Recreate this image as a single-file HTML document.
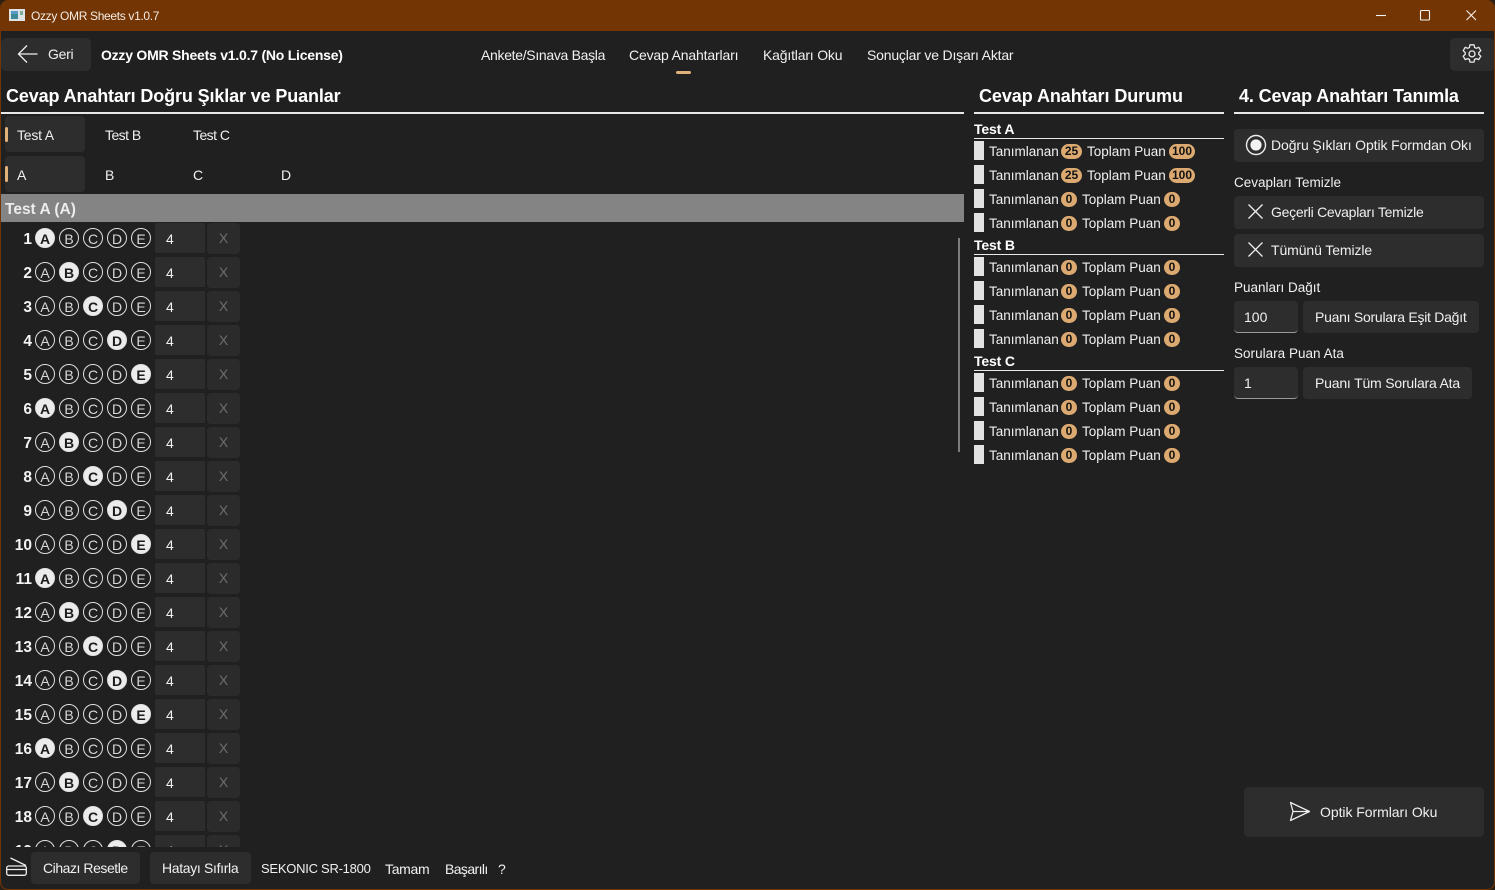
<!DOCTYPE html>
<html><head><meta charset="utf-8"><title>Ozzy OMR Sheets</title>
<style>
*{box-sizing:border-box}
html,body{margin:0;padding:0;width:1495px;height:890px;overflow:hidden;background:#2a2015}
body{font-family:"Liberation Sans",sans-serif;color:#f0f0f0;font-size:13px}
#w{position:absolute;left:0;top:0;width:1495px;height:890px;background:#202020;border:1px solid #733504;border-top:0;border-radius:8px;overflow:hidden}
#w>*{position:absolute}
.a{position:absolute}
.t{position:absolute;white-space:nowrap;line-height:20px;height:20px}
.st{position:absolute;white-space:nowrap;line-height:20px;height:20px;font-size:13.5px}
.b{position:absolute;background:#2d2d2d;border-radius:4px}
.h{position:absolute;white-space:nowrap;font-weight:bold;font-size:18px;line-height:24px;color:#fff}
.l{position:absolute;height:2px;background:#e8e8e8}
.l1{position:absolute;height:1px;background:#e8e8e8}
.s{position:absolute;left:973px;width:10px;height:19px;background:#e2e2e2}
.g{position:absolute;height:15px;line-height:15px;border-radius:8px;background:#dcaa70;color:#111;text-align:center;font-size:12px;font-weight:bold}
.tb{position:absolute;font-weight:bold;font-size:14px;line-height:18px;color:#fff;left:973px;letter-spacing:-.15px}
.r{position:absolute;left:0;width:958px;height:34px}
.n{position:absolute;right:927px;top:7px;font-weight:bold;font-size:15.5px;line-height:20px;color:#f4f4f4}
.c{position:absolute;top:5px;width:20px;height:20px;border:1px solid #e0e0e0;border-radius:50%;text-align:center;font-style:normal;font-size:14px;line-height:20px;color:#d8d8d8}
.c.on{background:#ececec;color:#1c1c1c;font-weight:bold}
.c1{left:34px}.c2{left:58px}.c3{left:82px}.c4{left:106px}.c5{left:130px}
.i{position:absolute;left:154px;top:0;width:50px;height:30px;background:#2d2d2d;border-radius:2px 0 0 2px;font-size:14px;line-height:32px;padding-left:11px;color:#f0f0f0}
.x{position:absolute;left:206px;top:0;width:33px;height:31px;background:#2b2b2b;border-radius:4px;text-align:center;font-size:14px;line-height:31px;color:#6e6e6e}
.u{border-bottom:1px solid #9a9a9a}
</style></head><body>
<div id="w">
<div class="a" style="left:-1px;top:0;width:1495px;height:31px;background:#733504"></div>
<svg class="a" style="left:8px;top:9px" width="16" height="12" viewBox="0 0 16 12"><rect width="16" height="12" fill="#dfe3e6"/><rect x="2" y="2" width="7" height="8" fill="#3d8a96"/><rect x="2" y="2" width="7" height="3" fill="#5a9ac8"/><rect x="11" y="2" width="3" height="4" fill="#7fae9a"/></svg>
<div class="t" style="left:30px;top:6px;font-size:12px;letter-spacing:-.33px;color:#f2ece6">Ozzy OMR Sheets v1.0.7</div>
<svg class="a" style="left:1370px;top:8px" width="115" height="16" viewBox="0 0 115 16" fill="none" stroke="#f2f2f2" stroke-width="1.1"><path d="M5 7.5h10"/><rect x="49.5" y="2.5" width="9" height="9.5" rx="1"/><path d="M95.5 2.5l9.5 9.5M105 2.5l-9.5 9.5"/></svg>

<div class="b" style="left:0;top:38px;width:90px;height:33px;border-radius:5px"></div>
<svg class="a" style="left:16px;top:44px" width="22" height="20" viewBox="0 0 22 20" fill="none" stroke="#eee" stroke-width="1.3"><path d="M20.5 10H1.5M10 1.5L1.5 10l8.5 8.5"/></svg>
<div class="t" style="left:47px;top:44px;font-size:14px;letter-spacing:-.3px">Geri</div>
<div class="t" style="left:100px;top:45px;font-size:14px;font-weight:bold;color:#fff;letter-spacing:-.23px">Ozzy OMR Sheets v1.0.7 (No License)</div>
<div class="t" style="left:480px;top:45px;font-size:14px;letter-spacing:-.31px">Ankete/Sınava Başla</div>
<div class="t" style="left:628px;top:45px;font-size:14px;letter-spacing:-.16px">Cevap Anahtarları</div>
<div class="a" style="left:675px;top:71px;width:15px;height:3px;border-radius:2px;background:#e2b07a"></div>
<div class="t" style="left:762px;top:45px;font-size:14px;letter-spacing:-.18px">Kağıtları Oku</div>
<div class="t" style="left:866px;top:45px;font-size:14px;letter-spacing:-.19px">Sonuçlar ve Dışarı Aktar</div>
<div class="b" style="left:1449px;top:38px;width:45px;height:33px;border-radius:5px"></div>
<svg class="a" style="left:1460px;top:43px" width="22" height="22" viewBox="0 0 22 22" fill="none" stroke="#eaeaea" stroke-width="1.3" stroke-linejoin="round"><path d="M9 1.8h4l.6 2.7 1.7.8 2.5-1 2 3.4-2 1.8v1.9l2 1.8-2 3.4-2.5-1-1.7.8-.6 2.7H9l-.6-2.7-1.7-.8-2.5 1-2-3.4 2-1.8v-1.9l-2-1.8 2-3.4 2.5 1 1.7-.8z"/><circle cx="11" cy="10.9" r="3"/></svg>

<div class="h" style="left:5px;top:84px;letter-spacing:-.13px">Cevap Anahtarı Doğru Şıklar ve Puanlar</div>
<div class="l" style="left:0;top:112px;width:963px"></div>
<div class="b" style="left:4px;top:116px;width:80px;height:36px"></div>
<div class="a" style="left:4px;top:127px;width:3px;height:15px;border-radius:2px;background:#e2b07a"></div>
<div class="t" style="left:16px;top:125px;font-size:14px;letter-spacing:-.2px">Test A</div>
<div class="t" style="left:104px;top:125px;font-size:14px;letter-spacing:-.55px">Test B</div>
<div class="t" style="left:192px;top:125px;font-size:14px;letter-spacing:-.55px">Test C</div>
<div class="b" style="left:4px;top:156px;width:80px;height:36px"></div>
<div class="a" style="left:4px;top:166px;width:3px;height:16px;border-radius:2px;background:#e2b07a"></div>
<div class="t" style="left:16px;top:165px;font-size:14px">A</div>
<div class="t" style="left:104px;top:165px;font-size:14px">B</div>
<div class="t" style="left:192px;top:165px;font-size:14px">C</div>
<div class="t" style="left:280px;top:165px;font-size:14px">D</div>
<div class="a" style="left:0;top:194px;width:963px;height:28px;background:#848484"></div>
<div class="t" style="left:4px;top:198.500px;font-size:15.5px;font-weight:bold;color:#ececec;margin-top:1px">Test A (A)</div>

<div class="a" style="left:0;top:222px;width:958px;height:625px;overflow:hidden">
<div class="r" style="top:1px"><span class="n">1</span><i class="c c1 on">A</i><i class="c c2">B</i><i class="c c3">C</i><i class="c c4">D</i><i class="c c5">E</i><div class="i">4</div><div class="x">X</div></div>
<div class="r" style="top:35px"><span class="n">2</span><i class="c c1">A</i><i class="c c2 on">B</i><i class="c c3">C</i><i class="c c4">D</i><i class="c c5">E</i><div class="i">4</div><div class="x">X</div></div>
<div class="r" style="top:69px"><span class="n">3</span><i class="c c1">A</i><i class="c c2">B</i><i class="c c3 on">C</i><i class="c c4">D</i><i class="c c5">E</i><div class="i">4</div><div class="x">X</div></div>
<div class="r" style="top:103px"><span class="n">4</span><i class="c c1">A</i><i class="c c2">B</i><i class="c c3">C</i><i class="c c4 on">D</i><i class="c c5">E</i><div class="i">4</div><div class="x">X</div></div>
<div class="r" style="top:137px"><span class="n">5</span><i class="c c1">A</i><i class="c c2">B</i><i class="c c3">C</i><i class="c c4">D</i><i class="c c5 on">E</i><div class="i">4</div><div class="x">X</div></div>
<div class="r" style="top:171px"><span class="n">6</span><i class="c c1 on">A</i><i class="c c2">B</i><i class="c c3">C</i><i class="c c4">D</i><i class="c c5">E</i><div class="i">4</div><div class="x">X</div></div>
<div class="r" style="top:205px"><span class="n">7</span><i class="c c1">A</i><i class="c c2 on">B</i><i class="c c3">C</i><i class="c c4">D</i><i class="c c5">E</i><div class="i">4</div><div class="x">X</div></div>
<div class="r" style="top:239px"><span class="n">8</span><i class="c c1">A</i><i class="c c2">B</i><i class="c c3 on">C</i><i class="c c4">D</i><i class="c c5">E</i><div class="i">4</div><div class="x">X</div></div>
<div class="r" style="top:273px"><span class="n">9</span><i class="c c1">A</i><i class="c c2">B</i><i class="c c3">C</i><i class="c c4 on">D</i><i class="c c5">E</i><div class="i">4</div><div class="x">X</div></div>
<div class="r" style="top:307px"><span class="n">10</span><i class="c c1">A</i><i class="c c2">B</i><i class="c c3">C</i><i class="c c4">D</i><i class="c c5 on">E</i><div class="i">4</div><div class="x">X</div></div>
<div class="r" style="top:341px"><span class="n">11</span><i class="c c1 on">A</i><i class="c c2">B</i><i class="c c3">C</i><i class="c c4">D</i><i class="c c5">E</i><div class="i">4</div><div class="x">X</div></div>
<div class="r" style="top:375px"><span class="n">12</span><i class="c c1">A</i><i class="c c2 on">B</i><i class="c c3">C</i><i class="c c4">D</i><i class="c c5">E</i><div class="i">4</div><div class="x">X</div></div>
<div class="r" style="top:409px"><span class="n">13</span><i class="c c1">A</i><i class="c c2">B</i><i class="c c3 on">C</i><i class="c c4">D</i><i class="c c5">E</i><div class="i">4</div><div class="x">X</div></div>
<div class="r" style="top:443px"><span class="n">14</span><i class="c c1">A</i><i class="c c2">B</i><i class="c c3">C</i><i class="c c4 on">D</i><i class="c c5">E</i><div class="i">4</div><div class="x">X</div></div>
<div class="r" style="top:477px"><span class="n">15</span><i class="c c1">A</i><i class="c c2">B</i><i class="c c3">C</i><i class="c c4">D</i><i class="c c5 on">E</i><div class="i">4</div><div class="x">X</div></div>
<div class="r" style="top:511px"><span class="n">16</span><i class="c c1 on">A</i><i class="c c2">B</i><i class="c c3">C</i><i class="c c4">D</i><i class="c c5">E</i><div class="i">4</div><div class="x">X</div></div>
<div class="r" style="top:545px"><span class="n">17</span><i class="c c1">A</i><i class="c c2 on">B</i><i class="c c3">C</i><i class="c c4">D</i><i class="c c5">E</i><div class="i">4</div><div class="x">X</div></div>
<div class="r" style="top:579px"><span class="n">18</span><i class="c c1">A</i><i class="c c2">B</i><i class="c c3 on">C</i><i class="c c4">D</i><i class="c c5">E</i><div class="i">4</div><div class="x">X</div></div>
<div class="r" style="top:613px"><span class="n">19</span><i class="c c1">A</i><i class="c c2">B</i><i class="c c3">C</i><i class="c c4 on">D</i><i class="c c5">E</i><div class="i">4</div><div class="x">X</div></div>
</div>
<div class="a" style="left:957px;top:238px;width:2px;height:214px;background:#7c7c7c"></div>

<div class="h" style="left:978px;top:84px;letter-spacing:-.07px">Cevap Anahtarı Durumu</div>
<div class="l" style="left:973px;top:112px;width:250px"></div>

<div class="tb" style="top:120px">Test A</div><div class="l1" style="left:973px;top:138px;width:250px"></div>
<div class="s" style="top:141px"></div><div class="st" style="left:988px;top:142px">Tanımlanan</div><div class="g" style="left:1060px;top:144px;width:21px">25</div><div class="st" style="left:1086px;top:142px">Toplam Puan</div><div class="g" style="left:1168px;top:144px;width:26px">100</div>
<div class="s" style="top:165px"></div><div class="st" style="left:988px;top:166px">Tanımlanan</div><div class="g" style="left:1060px;top:168px;width:21px">25</div><div class="st" style="left:1086px;top:166px">Toplam Puan</div><div class="g" style="left:1168px;top:168px;width:26px">100</div>
<div class="s" style="top:189px"></div><div class="st" style="left:988px;top:190px">Tanımlanan</div><div class="g" style="left:1060px;top:192px;width:16px">0</div><div class="st" style="left:1081px;top:190px">Toplam Puan</div><div class="g" style="left:1163px;top:192px;width:16px">0</div>
<div class="s" style="top:213px"></div><div class="st" style="left:988px;top:214px">Tanımlanan</div><div class="g" style="left:1060px;top:216px;width:16px">0</div><div class="st" style="left:1081px;top:214px">Toplam Puan</div><div class="g" style="left:1163px;top:216px;width:16px">0</div>

<div class="tb" style="top:236px">Test B</div><div class="l1" style="left:973px;top:254px;width:250px"></div>
<div class="s" style="top:257px"></div><div class="st" style="left:988px;top:258px">Tanımlanan</div><div class="g" style="left:1060px;top:260px;width:16px">0</div><div class="st" style="left:1081px;top:258px">Toplam Puan</div><div class="g" style="left:1163px;top:260px;width:16px">0</div>
<div class="s" style="top:281px"></div><div class="st" style="left:988px;top:282px">Tanımlanan</div><div class="g" style="left:1060px;top:284px;width:16px">0</div><div class="st" style="left:1081px;top:282px">Toplam Puan</div><div class="g" style="left:1163px;top:284px;width:16px">0</div>
<div class="s" style="top:305px"></div><div class="st" style="left:988px;top:306px">Tanımlanan</div><div class="g" style="left:1060px;top:308px;width:16px">0</div><div class="st" style="left:1081px;top:306px">Toplam Puan</div><div class="g" style="left:1163px;top:308px;width:16px">0</div>
<div class="s" style="top:329px"></div><div class="st" style="left:988px;top:330px">Tanımlanan</div><div class="g" style="left:1060px;top:332px;width:16px">0</div><div class="st" style="left:1081px;top:330px">Toplam Puan</div><div class="g" style="left:1163px;top:332px;width:16px">0</div>

<div class="tb" style="top:352px">Test C</div><div class="l1" style="left:973px;top:370px;width:250px"></div>
<div class="s" style="top:373px"></div><div class="st" style="left:988px;top:374px">Tanımlanan</div><div class="g" style="left:1060px;top:376px;width:16px">0</div><div class="st" style="left:1081px;top:374px">Toplam Puan</div><div class="g" style="left:1163px;top:376px;width:16px">0</div>
<div class="s" style="top:397px"></div><div class="st" style="left:988px;top:398px">Tanımlanan</div><div class="g" style="left:1060px;top:400px;width:16px">0</div><div class="st" style="left:1081px;top:398px">Toplam Puan</div><div class="g" style="left:1163px;top:400px;width:16px">0</div>
<div class="s" style="top:421px"></div><div class="st" style="left:988px;top:422px">Tanımlanan</div><div class="g" style="left:1060px;top:424px;width:16px">0</div><div class="st" style="left:1081px;top:422px">Toplam Puan</div><div class="g" style="left:1163px;top:424px;width:16px">0</div>
<div class="s" style="top:445px"></div><div class="st" style="left:988px;top:446px">Tanımlanan</div><div class="g" style="left:1060px;top:448px;width:16px">0</div><div class="st" style="left:1081px;top:446px">Toplam Puan</div><div class="g" style="left:1163px;top:448px;width:16px">0</div>

<div class="h" style="left:1238px;top:84px;letter-spacing:-.13px">4. Cevap Anahtarı Tanımla</div>
<div class="l" style="left:1233px;top:112px;width:250px"></div>
<div class="b" style="left:1233px;top:129px;width:250px;height:33px"></div>
<svg class="a" style="left:1244px;top:134px" width="22" height="22" viewBox="0 0 22 22"><circle cx="11" cy="11" r="9.5" fill="none" stroke="#eee" stroke-width="1.4"/><circle cx="11" cy="11" r="5.6" fill="#f2f2f2"/></svg>
<div class="a" style="left:1270px;top:135px;width:203px;height:20px;overflow:hidden"><div class="t" style="left:0;top:0;font-size:14px;letter-spacing:-.1px">Doğru Şıkları Optik Formdan Okı</div></div>
<div class="t" style="left:1233px;top:173px;font-size:13.5px">Cevapları Temizle</div>
<div class="b" style="left:1233px;top:196px;width:250px;height:33px"></div>
<svg class="a" style="left:1246px;top:203px" width="17" height="17" viewBox="0 0 17 17" stroke="#eee" stroke-width="1.3"><path d="M1.5 1.5l14 14M15.5 1.5l-14 14"/></svg>
<div class="t" style="left:1270px;top:202px;font-size:14px;letter-spacing:-.27px">Geçerli Cevapları Temizle</div>
<div class="b" style="left:1233px;top:234px;width:250px;height:33px"></div>
<svg class="a" style="left:1246px;top:241px" width="17" height="17" viewBox="0 0 17 17" stroke="#eee" stroke-width="1.3"><path d="M1.5 1.5l14 14M15.5 1.5l-14 14"/></svg>
<div class="t" style="left:1270px;top:240px;font-size:14px;letter-spacing:-.1px">Tümünü Temizle</div>
<div class="t" style="left:1233px;top:278px;font-size:13.5px">Puanları Dağıt</div>
<div class="b u" style="left:1233px;top:301px;width:64px;height:32px"></div>
<div class="t" style="left:1243px;top:307px;font-size:14px">100</div>
<div class="b" style="left:1302px;top:301px;width:176px;height:32px"></div>
<div class="t" style="left:1314px;top:307px;font-size:14px;letter-spacing:-.26px">Puanı Sorulara Eşit Dağıt</div>
<div class="t" style="left:1233px;top:344px;font-size:13.5px;letter-spacing:.02px">Sorulara Puan Ata</div>
<div class="b u" style="left:1233px;top:367px;width:64px;height:32px"></div>
<div class="t" style="left:1243px;top:373px;font-size:14px">1</div>
<div class="b" style="left:1302px;top:367px;width:169px;height:32px"></div>
<div class="t" style="left:1314px;top:373px;font-size:14px;letter-spacing:-.19px">Puanı Tüm Sorulara Ata</div>

<div class="b" style="left:1243px;top:787px;width:240px;height:50px;border-radius:5px"></div>
<svg class="a" style="left:1288px;top:801px" width="22" height="21" viewBox="0 0 22 21" fill="none" stroke="#eee" stroke-width="1.3" stroke-linejoin="round"><path d="M1.5 1.5L20.5 10.5L1.5 19.5L4 10.5zM4 10.5H20.5"/></svg>
<div class="t" style="left:1319px;top:802px;font-size:14px;letter-spacing:-.05px">Optik Formları Oku</div>

<svg class="a" style="left:5px;top:856px" width="22" height="22" viewBox="0 0 22 22" fill="none" stroke="#eee" stroke-width="1.3"><path d="M4.5 2L20 9.500"/><rect x=".7" y="10" width="19.6" height="9.300" rx="2"/><path d="M.7 13.500H20.300"/></svg>
<div class="b" style="left:30px;top:852px;width:109px;height:32px"></div>
<div class="t" style="left:42px;top:858px;font-size:14px;letter-spacing:-.45px">Cihazı Resetle</div>
<div class="b" style="left:149px;top:852px;width:101px;height:32px"></div>
<div class="t" style="left:161px;top:858px;font-size:14px;letter-spacing:-.33px">Hatayı Sıfırla</div>
<div class="t" style="left:260px;top:859px;font-size:13px;letter-spacing:-.26px">SEKONIC SR-1800</div>
<div class="t" style="left:384px;top:859px;font-size:14px;letter-spacing:-.3px">Tamam</div>
<div class="t" style="left:444px;top:859px;font-size:14px;letter-spacing:-.6px">Başarılı</div>
<div class="t" style="left:497px;top:859px;font-size:14px">?</div>
</div>
</body></html>
